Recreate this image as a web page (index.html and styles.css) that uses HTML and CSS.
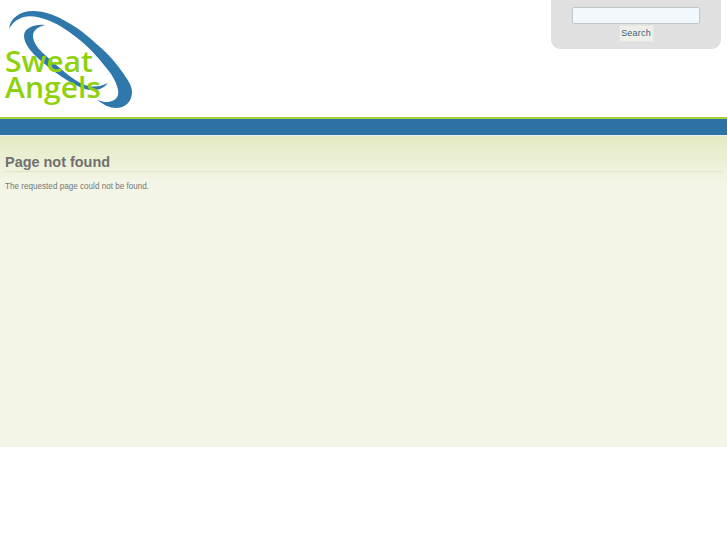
FILE: index.html
```html
<!DOCTYPE html>
<html lang="en">
<head>
<meta charset="utf-8">
<title>Page not found | Sweat Angels</title>
<link rel="stylesheet" href="styles.css">
</head>
<body>
<header class="header">
  <a class="logo" href="#" aria-label="Sweat Angels">
    <svg class="logo-svg" width="140" height="115" viewBox="0 0 140 115">
      <path class="swoosh" d="M9 29C10 18 20 11 33 11C45 11 55 15 67 22C80 29 90 38 100 47C110 56 117 64 123 73C127 79 132 85 132 92C132 102 125 108 116 108C110 108 104 105 97 100C103 102 108 103 112 101C117 99 119 95 118 90C117 84 113 76 108 70C100 60 92 50 81 41C70 32 60 25 50 21C40 17 30 15 24 17C17 19 12 23 9 29Z"/>
      <path class="swoosh" d="M45 25C36 24 24 27 24 36C24 44 32 53 40 60C53 71 70 84 85 89C96 92 103 89 108 83C102 86 94 88 85 85C74 81 62 70 45 55C38 49 33 42 33 36C33 30 38 27 45 25Z"/>
      <text class="logo-text" x="5" y="72" textLength="88" lengthAdjust="spacingAndGlyphs">Sweat</text>
      <text class="logo-text" x="5" y="98" textLength="96" lengthAdjust="spacingAndGlyphs">Angels</text>
    </svg>
  </a>
  <form class="search">
    <input class="search-input" type="text" aria-label="Search">
    <button class="search-button" type="button">Search</button>
  </form>
</header>
<nav class="nav"></nav>
<main class="content">
  <h1 class="title">Page not found</h1>
  <p class="message">The requested page could not be found.</p>
</main>
</body>
</html>
```
FILE: styles.css
```css
html, body {
  margin: 0;
  padding: 0;
  background: #fff;
}
body {
  font-family: "Liberation Sans", Arial, sans-serif;
  color: #666;
}
.header {
  height: 117px;
  display: flex;
  justify-content: space-between;
  align-items: flex-start;
  padding-right: 6px;
  overflow: hidden;
}
.logo {
  display: block;
  height: 115px;
}
.logo-svg {
  display: block;
}
.swoosh {
  fill: #2f78ab;
}
.logo-text {
  font-family: "Open Sans", Lato, sans-serif;
  font-size: 28px;
  font-weight: 600;
  fill: #8fd10f;
}
.search {
  width: 170px;
  height: 49px;
  box-sizing: border-box;
  padding-top: 7px;
  background: #e0e0e0;
  border-radius: 0 0 9px 9px;
  display: flex;
  flex-direction: column;
  align-items: center;
  gap: 1px;
}
.search-input {
  width: 128px;
  height: 17px;
  box-sizing: border-box;
  margin: 0;
  padding: 0;
  background: #f2f8fb;
  border: 1px solid #bfc9cc;
  border-radius: 2px;
}
.search-button {
  width: 35px;
  height: 17px;
  box-sizing: border-box;
  margin: 0;
  padding: 0 0 2px;
  border: 1px solid #e6e6e2;
  background: #efefea;
  color: #3f5f75;
  font-family: "Liberation Sans", Arial, sans-serif;
  font-size: 9px;
  letter-spacing: 0.2px;
}
.nav {
  height: 16px;
  background: #2d72a5;
  border-top: 2px solid #a6d13a;
  border-bottom: 1px solid #e8f0f0;
}
.content {
  height: 311px;
  box-sizing: border-box;
  padding: 17px 5px 0;
  background: linear-gradient(#e3ebc2 0, #f3f5e6 46px);
}
.title {
  margin: 0;
  font-size: 14.45px;
  line-height: 18px;
  font-weight: bold;
  color: #707070;
  border-bottom: 1px solid #dfe3c9;
}
.message {
  margin: 9px 0 0;
  font-size: 8.15px;
  line-height: 11px;
  color: #777;
}
```
